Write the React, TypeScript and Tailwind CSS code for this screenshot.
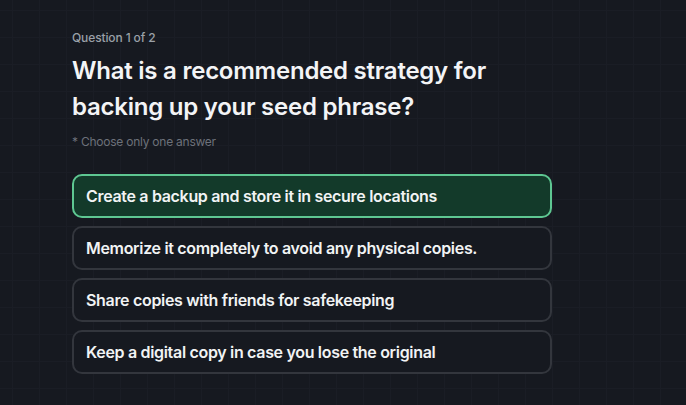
import React from "react";

const options = [
  "Create a backup and store it in secure locations",
  "Memorize it completely to avoid any physical copies.",
  "Share copies with friends for safekeeping",
  "Keep a digital copy in case you lose the original",
];

export default function App() {
  return (
    <div
      className="w-[686px] h-[405px] bg-[#161920] overflow-hidden bg-[linear-gradient(to_right,#1a1d25_1px,transparent_1px),linear-gradient(to_bottom,#1a1d25_1px,transparent_1px)] bg-[size:27px_27px] bg-[position:12px_10px]"
      style={{ fontFamily: "Inter, 'Noto Sans', sans-serif" }}
    >
      <div className="pl-[72px] pt-[30px] w-[552px]">
        <div className="text-[12px] leading-[16px] font-medium tracking-[-0.01em] text-[#9aa0a8]">Question 1 of 2</div>
        <h1 className="mt-[7px] text-[24px] leading-[36px] font-semibold tracking-[-0.01em] text-[#f3f4f6]">
          What is a recommended strategy for
          <br />
          backing up your seed phrase?
        </h1>
        <div className="mt-[9px] text-[12px] leading-[16px] tracking-[-0.02em] text-[#6d717a]">* Choose only one answer</div>
        <div className="mt-[24px] flex flex-col gap-[8px]">
          {options.map((o, i) => (
            <div
              key={i}
              className={
                i === 0
                  ? "h-[44px] w-[480px] rounded-[10px] border-2 border-[#5ec792] bg-[#133a2a] flex items-center px-[12px] text-[16px] font-semibold tracking-[-0.02em] text-[#f1f3f4]"
                  : "h-[44px] w-[480px] rounded-[10px] border-2 border-[#33363d] bg-[#161920] flex items-center px-[12px] text-[16px] font-semibold tracking-[-0.02em] text-[#f1f3f4]"
              }
            >
              {o}
            </div>
          ))}
        </div>
      </div>
    </div>
  );
}
